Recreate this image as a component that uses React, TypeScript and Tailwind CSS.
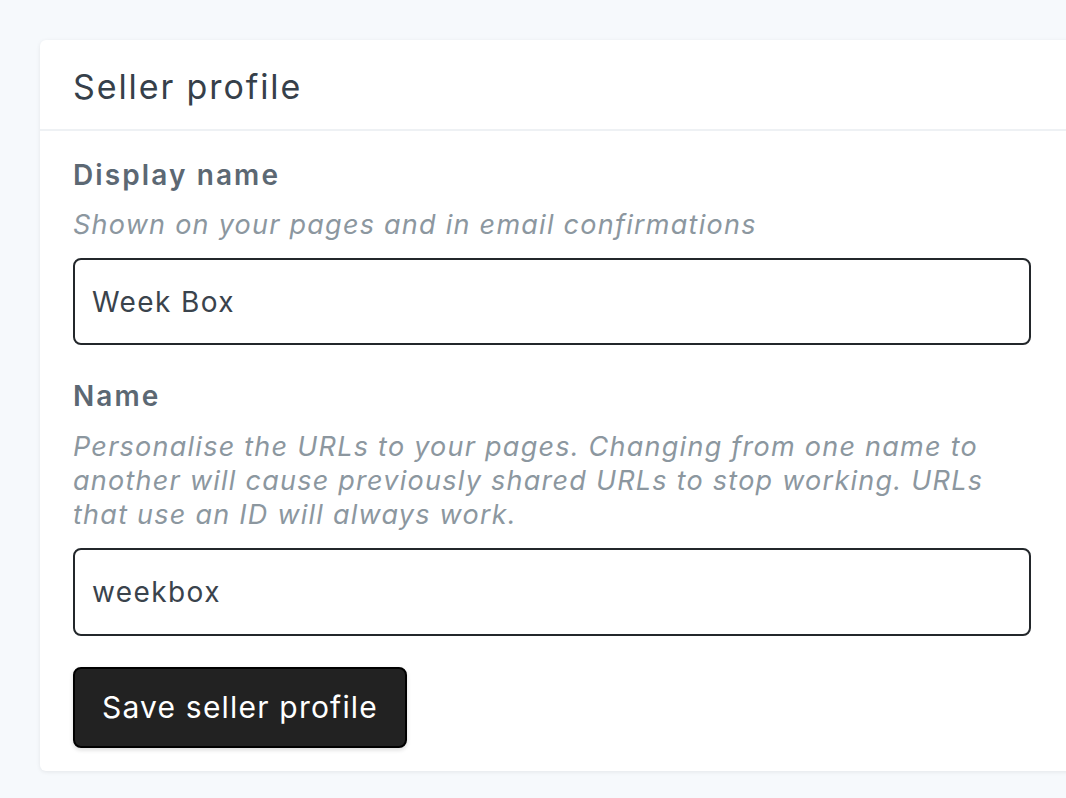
export default function App() {
  return (
    <div
      className="min-h-screen bg-[#f6f9fc] pt-10 pl-10 overflow-hidden"
      style={{ fontFamily: "Inter, 'Noto Sans', sans-serif" }}
    >
      <div className="w-[1100px] bg-white rounded-l-md shadow-[0_1px_4px_rgba(0,0,0,0.08)]">
        {/* Header */}
        <div className="h-[91px] flex items-center px-[33px] pt-[3px] border-b-2 border-[#eef1f4]">
          <h1 className="text-[34px] text-[#36404a] font-normal tracking-[1.9px]">
            Seller profile
          </h1>
        </div>

        {/* Form */}
        <div className="px-[33px] pt-[27px] pb-[23px] w-[1080px]">
          <label className="block text-[28px] leading-[34px] font-semibold text-[#5c6873] tracking-[2.1px]">
            Display name
          </label>
          <p className="mt-[16px] text-[27px] leading-[34px] italic text-[#8c979f] tracking-[1.25px]">
            Shown on your pages and in email confirmations
          </p>
          <input
            readOnly
            value="Week Box"
            className="mt-[16px] block w-[958px] h-[87px] rounded-lg border-2 border-[#23272b] px-[17px] text-[28px] tracking-[1.4px] text-[#3a434c] outline-none"
          />

          <label className="mt-[34px] block text-[28px] leading-[34px] font-semibold text-[#5c6873] tracking-[2.1px]">
            Name
          </label>
          <p className="mt-[17px] text-[27px] leading-[34px] italic text-[#8c979f] tracking-[1.25px] whitespace-nowrap">
            Personalise the URLs to your pages. Changing from one name to
            <br />
            another will cause previously shared URLs to stop working. URLs
            <br />
            that use an ID will always work.
          </p>
          <input
            readOnly
            value="weekbox"
            className="mt-[16px] block w-[958px] h-[88px] rounded-lg border-2 border-[#23272b] px-[17px] text-[28px] tracking-[1.4px] text-[#3a434c] outline-none"
          />

          <button className="mt-[31px] h-[81px] px-[27px] rounded-lg bg-[#222222] border-2 border-black text-white text-[30px] tracking-[1.2px] shadow-[0_2px_4px_rgba(0,0,0,0.15)]">
            Save seller profile
          </button>
        </div>
      </div>
    </div>
  );
}
